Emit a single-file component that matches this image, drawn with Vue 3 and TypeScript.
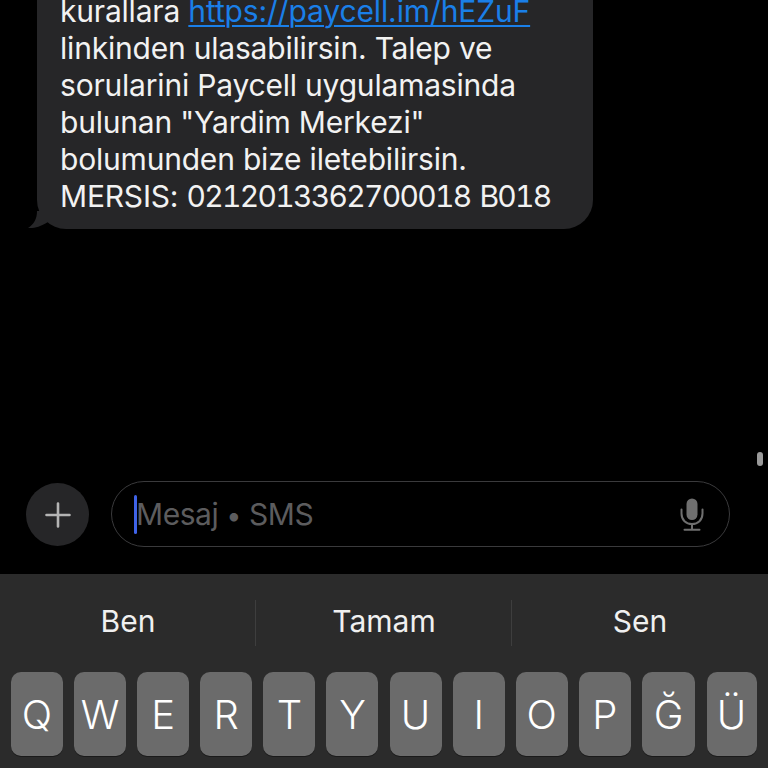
<script setup lang="ts">
const lines: string[] = [
  'linkinden ulasabilirsin. Talep ve',
  'sorularini Paycell uygulamasinda',
  'bulunan "Yardim Merkezi"',
  'bolumunden bize iletebilirsin.',
]
const suggestions: string[] = ['Ben', 'Tamam', 'Sen']
const keys: string[] = ['Q', 'W', 'E', 'R', 'T', 'Y', 'U', 'I', 'O', 'P', 'Ğ', 'Ü']
</script>

<template>
  <div class="screen">
    <main class="thread">
      <div class="bubble">
        <div class="line">kurallara <a class="link">https://paycell.im/hEZuF</a></div>
        <div v-for="l in lines" :key="l" class="line">{{ l }}</div>
        <div class="line">MERSIS: <span class="digits">0212013362700018 B018</span></div>
        <svg class="tail" width="20" height="18" viewBox="0 0 20 18">
          <path d="M9 0C9 8 6 13 0 17C6 17.500 12 16 20 11L20 0Z" fill="#262628" />
        </svg>
      </div>
      <span class="scroll-thumb"></span>
    </main>
    <section class="composer">
      <button class="plus" aria-label="Ekle">
        <svg width="26" height="26" viewBox="0 0 26 26">
          <path d="M13 1.500V24.500M1.500 13H24.500" stroke="#b4b4b4" stroke-width="2.600" stroke-linecap="round" />
        </svg>
      </button>
      <div class="field">
        <span class="caret"></span>
        <span class="placeholder">Mesaj <span class="dot">•</span> SMS</span>
        <svg class="mic" width="24" height="33" viewBox="0 0 24 33">
          <rect x="6.500" y="0.500" width="11" height="21.500" rx="5.500" fill="#6f6f6f" />
          <path d="M1.500 11.500V15.500C1.500 22 6 26 12 26C18 26 22.500 22 22.500 15.500V11.500M12 26V31.500M4.500 31.800H19.500" fill="none" stroke="#6f6f6f" stroke-width="2" stroke-linecap="round" />
        </svg>
      </div>
    </section>
    <section class="keyboard">
      <div class="suggestions">
        <div v-for="s in suggestions" :key="s" class="suggestion">{{ s }}</div>
      </div>
      <div class="row">
        <div
          v-for="k in keys"
          :key="k"
          class="key"
          :class="{ wide: k === 'Ğ', narrow: k === 'Ü' }"
        >{{ k }}</div>
      </div>
    </section>
  </div>
</template>

<style scoped>
.screen {
  width: 768px;
  height: 768px;
  overflow: hidden;
  background: #000;
  display: flex;
  flex-direction: column;
  font-family: Inter, "Liberation Sans", sans-serif;
  color: #f2f2f2;
}
.thread {
  height: 480px;
  flex: none;
  position: relative;
}
.bubble {
  position: relative;
  width: 556px;
  box-sizing: border-box;
  margin: -7px 0 0 37px;
  padding: 0 0 14px 23px;
  background: #262628;
  border-radius: 0 0 29px 29px;
}
.line {
  font-size: 30px;
  line-height: 37px;
  white-space: nowrap;
  letter-spacing: -0.2px;
}
.digits {
  font-variant-numeric: tabular-nums;
  letter-spacing: -1.700px;
  word-spacing: 2.500px;
}
.link {
  color: #1a7fe8;
  letter-spacing: -0.12px;
  text-decoration: underline;
  text-decoration-thickness: 1.500px;
  text-underline-offset: 3px;
}
.tail {
  position: absolute;
  left: -9px;
  bottom: 0;
}
.scroll-thumb {
  position: absolute;
  left: 757px;
  top: 452px;
  width: 6px;
  height: 14px;
  border-radius: 3px;
  background: #9a9a9a;
}
.composer {
  height: 94px;
  flex: none;
  display: flex;
  align-items: flex-start;
  padding: 1px 38px 0 26px;
  gap: 22px;
  box-sizing: border-box;
}
.plus {
  width: 63px;
  height: 63px;
  margin-top: 2px;
  flex: none;
  padding: 0;
  border: 0;
  border-radius: 50%;
  background: #262628;
  display: flex;
  align-items: center;
  justify-content: center;
}
.field {
  flex: 1;
  height: 66px;
  box-sizing: border-box;
  border: 1.500px solid #3a3a3c;
  border-radius: 33px;
  display: flex;
  align-items: center;
  padding: 0 25px 0 22px;
}
.caret {
  width: 3px;
  height: 39px;
  border-radius: 2px;
  background: #3f63e8;
  flex: none;
}
.placeholder {
  flex: 1;
  margin-left: -1px;
  font-size: 30px;
  color: #5c5c5e;
  letter-spacing: -0.45px;
}
.dot {
  font-size: 27px;
}
.mic {
  flex: none;
}
.keyboard {
  flex: 1;
  background: #2b2b2b;
  display: flex;
  flex-direction: column;
}
.suggestions {
  height: 98px;
  flex: none;
  display: grid;
  grid-template-columns: repeat(3, 1fr);
  padding-bottom: 4px;
  box-sizing: border-box;
}
.suggestion {
  font-size: 30px;
  display: flex;
  align-items: center;
  justify-content: center;
  position: relative;
  color: #f0f0f0;
}
.suggestion + .suggestion::before {
  content: "";
  position: absolute;
  left: -1.500px;
  top: 26px;
  height: 46px;
  width: 1.500px;
  background: #3e3e3e;
}
.row {
  display: flex;
  gap: 11.100px;
  padding: 0 11px;
}
.key {
  flex: none;
  width: 52px;
  height: 84px;
  box-sizing: border-box;
  border-radius: 10px;
  background: #6b6b6b;
  box-shadow: 0 1px 0 #1a1a1a;
  font-size: 40px;
  font-weight: 300;
  color: #fff;
  display: flex;
  align-items: center;
  justify-content: center;
}
.key.wide {
  width: 53.500px;
}
.key.narrow {
  width: 50px;
}
</style>
